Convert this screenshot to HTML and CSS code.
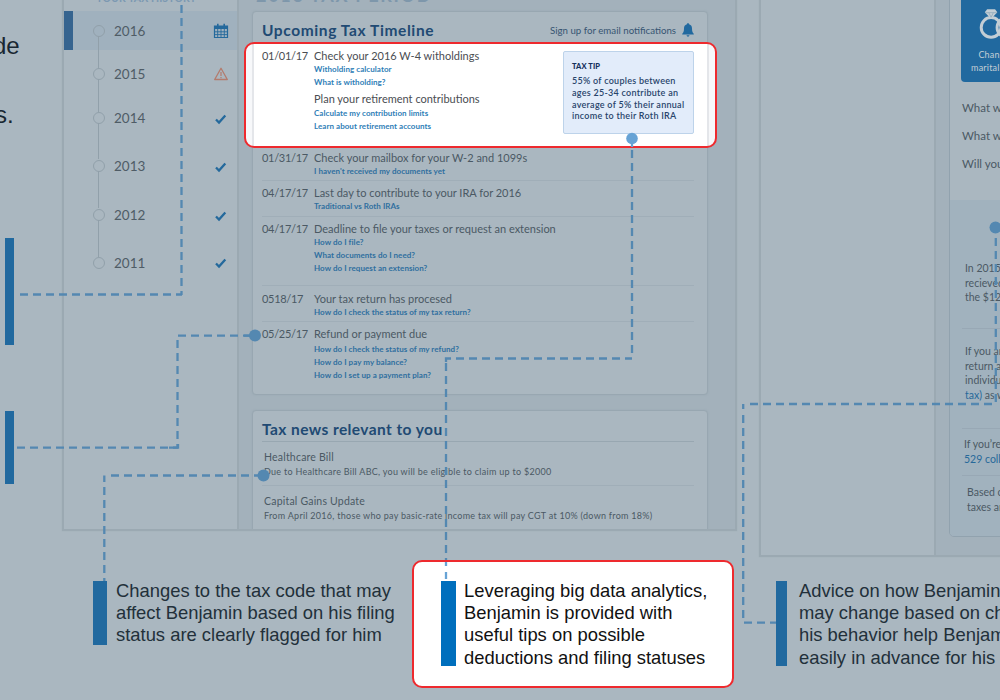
FILE: index.html
```html
<!DOCTYPE html>
<html lang="en">
<head>
<meta charset="utf-8">
<title>Tax dashboard walkthrough</title>
<link rel="stylesheet" href="styles.css">
</head>
<body>
<main class="board">
  <div class="note-fragment fragment-a">de</div>
  <div class="note-fragment fragment-b">s.</div>

  <section class="window dashboard">
    <aside class="history">
      <h3 class="history-title">YOUR TAX HISTORY</h3>
      <ol class="years">
        <li class="year y2016"><i class="ring"></i><span>2016</span>
          <svg class="icon" viewBox="0 0 16 16"><path d="M1.5 3h13v11.5h-13z" fill="none" stroke="currentColor" stroke-width="1.2"/><path d="M1.5 3h13v3h-13zM4 .8h1.6v3H4zM10.4.8H12v3h-1.600z" fill="currentColor"/><path d="M4.700 5v9M8 5v9M11.300 5v9M1.500 8.800h13M1.500 11.600h13" stroke="currentColor" stroke-width=".9"/></svg></li>
        <li class="year y2015"><i class="ring"></i><span>2015</span>
          <svg class="icon warn" viewBox="0 0 16 16"><path d="M8 2.200 14.300 13.500H1.700z" fill="none" stroke="currentColor" stroke-width="1.300" stroke-linejoin="round"/><path d="M8 6v4M8 11v1.200" stroke="currentColor" stroke-width="1.200"/></svg></li>
        <li class="year y2014"><i class="ring"></i><span>2014</span>
          <svg class="icon check" viewBox="0 0 16 16"><path d="M3 8.500 6 11.500 12.300 4.500" fill="none" stroke="currentColor" stroke-width="2.300"/></svg></li>
        <li class="year y2013"><i class="ring"></i><span>2013</span>
          <svg class="icon check" viewBox="0 0 16 16"><path d="M3 8.500 6 11.500 12.300 4.500" fill="none" stroke="currentColor" stroke-width="2.300"/></svg></li>
        <li class="year y2012"><i class="ring"></i><span>2012</span>
          <svg class="icon check" viewBox="0 0 16 16"><path d="M3 8.500 6 11.500 12.300 4.500" fill="none" stroke="currentColor" stroke-width="2.300"/></svg></li>
        <li class="year y2011"><i class="ring"></i><span>2011</span>
          <svg class="icon check last" viewBox="0 0 16 16"><path d="M3 8.500 6 11.500 12.300 4.500" fill="none" stroke="currentColor" stroke-width="2.300"/></svg></li>
      </ol>
    </aside>
    <div class="content">
      <h1 class="period">2016 TAX PERIOD</h1>
      <section class="card timeline">
        <header class="card-head">
          <h2>Upcoming Tax Timeline</h2>
          <span class="signup">Sign up for email notifications</span>
          <svg class="bell" viewBox="0 0 12 14"><path d="M6 .3c.7 0 1.100.4 1.100 1C9.200 1.900 10 3.500 10 5.500c0 3 .6 4.200 1.800 5.300v.7H.2v-.7C1.400 9.700 2 8.500 2 5.500c0-2 .8-3.600 2.900-4.200 0-.6.4-1 1.100-1zM4.500 12.300h3C7.300 13.200 6.800 13.700 6 13.700s-1.300-.5-1.500-1.400z" fill="currentColor"/></svg>
        </header>
        <article class="event event-1 spotlight">
          <time>01/01/17</time>
          <div class="detail">
            <h4>Check your 2016 W-4 witholdings</h4>
            <a>Witholding calculator</a><a>What is witholding?</a>
            <h4 class="second">Plan your retirement contributions</h4>
            <a>Calculate my contribution limits</a><a>Learn about retirement accounts</a>
          </div>
          <aside class="tip">
            <strong>TAX TIP</strong>
            <p>55% of couples between<br>ages 25-34 contribute an<br>average of 5% their annual<br>income to their Roth IRA</p>
          </aside>
        </article>
        <article class="event event-2"><time>01/31/17</time><div class="detail"><h4>Check your mailbox for your W-2 and 1099s</h4><a>I haven't received my documents yet</a></div></article>
        <article class="event event-3"><time>04/17/17</time><div class="detail"><h4>Last day to contribute to your IRA for 2016</h4><a>Traditional vs Roth IRAs</a></div></article>
        <article class="event event-4"><time>04/17/17</time><div class="detail"><h4>Deadline to file your taxes or request an extension</h4><a>How do I file?</a><a>What documents do I need?</a><a>How do I request an extension?</a></div></article>
        <article class="event event-5"><time>0518/17</time><div class="detail"><h4>Your tax return has procesed</h4><a>How do I check the status of my tax return?</a></div></article>
        <article class="event event-6"><time>05/25/17</time><div class="detail"><h4>Refund or payment due</h4><a>How do I check the status of my refund?</a><a>How do I pay my balance?</a><a>How do I set up a payment plan?</a></div></article>
      </section>
      <section class="card news">
        <h2>Tax news relevant to you</h2>
        <article class="story"><h4>Healthcare Bill</h4><p>Due to Healthcare Bill ABC, you will be eligible to claim up to $2000</p></article>
        <article class="story"><h4>Capital Gains Update</h4><p>From April 2016, those who pay basic-rate income tax will pay CGT at 10% (down from 18%)</p></article>
      </section>
    </div>
  </section>

  <section class="window planner">
    <div class="planner-side"></div>
    <div class="planner-main">
      <div class="planner-card">
        <div class="tile">
          <svg class="rings" viewBox="0 0 38 30"><circle cx="12" cy="18" r="8.700" fill="none" stroke="currentColor" stroke-width="2.600"/><circle cx="26" cy="18" r="8.700" fill="none" stroke="currentColor" stroke-width="2.600"/><path d="M8.500 2h7l2 2.600-5.500 6-5.500-6z" fill="currentColor"/><path d="M7 5h10M10 5l2 4 2-4" fill="none" stroke="#8fa9bb" stroke-width=".7"/></svg>
          <span>Change in</span><span>marital status</span>
        </div>
        <ul class="questions"><li>What will</li><li>What will</li><li>Will you</li></ul>
        <div class="advice">
          <p class="a1">In 2015 you<br>recieved<br>the $1200</p>
          <p class="a2">If you are<br>return and<br>individual<br><a>tax)</a> as well</p>
          <p class="a3">If you’re<br><a>529 college</a></p>
          <p class="a4">Based on<br>taxes and</p>
        </div>
      </div>
    </div>
  </section>

  <aside class="callout marker-a"></aside>
  <aside class="callout marker-b"></aside>
  <aside class="callout changes"><p>Changes to the tax code that may<br>affect Benjamin based on his filing<br>status are clearly flagged for him</p></aside>
  <aside class="callout featured"><p>Leveraging big data analytics,<br>Benjamin is provided with<br>useful tips on possible<br>deductions and filing statuses</p></aside>
  <aside class="callout future"><p>Advice on how Benjamin<br>may change based on changes<br>his behavior help Benjamin<br>easily in advance for his</p></aside>

  <svg class="connectors" viewBox="0 0 1000 700">
    <g class="dash">
      <path d="M181.500 5V295"/><path d="M20 294.500H182"/>
      <path d="M178 335.600H250"/><path d="M177.500 340V448"/><path d="M17 447.600H178"/>
      <path d="M111 475.500H258"/><path d="M104.300 487V581"/>
      <path d="M632 150V358"/><path d="M456 358.500H632"/><path d="M446 363V560"/>
      <path d="M995.800 238V403"/><path d="M750 404H996"/><path d="M743.200 415V620"/><path d="M744 622.700H776"/>
    </g>
    <g class="solid"><path d="M104.300 482V475.500"/><path d="M446 362V358.500H451"/><path d="M743.200 409V404"/><path d="M244 335.600H250M169 447.600H178V444"/></g>
    <g class="dots"><circle cx="255" cy="335.600" r="6"/><circle cx="263.500" cy="475.500" r="6"/><circle cx="995.500" cy="227.500" r="6"/></g>
    <g class="bright"><path d="M632 140V147M446 562V566M446 572V579"/><circle cx="632" cy="138.500" r="5.800"/></g>
  </svg>
</main>
</body>
</html>
```

FILE: styles.css
```css
*, *::before, *::after { box-sizing: border-box; }
body { margin: 0; }
h1, h2, h3, h4, p, ol, ul { margin: 0; padding: 0; list-style: none; font-weight: 400; }
.board {
  position: relative; width: 1000px; height: 700px; overflow: hidden;
  background: #aab7c0; color: #4b5964; font-family: Lato, "Open Sans", sans-serif;
}
.note-fragment { position: absolute; left: 0; font: 24px/28px "Liberation Sans", Arial, sans-serif; color: #192732; }
.fragment-a { left: -7px; top: 32px; }
.fragment-b { left: -5px; top: 101px; }

/* application windows */
.window { position: absolute; border: 2px solid #9ba9b2; display: flex; box-shadow: 0 0 1px #9ba9b2; background: #a3b1bb; }
.dashboard { left: 62px; top: -13px; width: 675px; height: 544px; overflow: hidden; }
.history { width: 175px; background: #aab7c0; border-right: 2px solid #9ba9b2; }
.history-title { padding-left: 32px; height: 22px; font-size: 10.500px; line-height: 18px; font-weight: 700; letter-spacing: .1px; color: #7c99b2; }
.year { display: flex; align-items: center; padding: 0 8px 0 29px; font-size: 13.500px; letter-spacing: 0; position: relative; color: #4f5c66; }
.year span { margin-left: 9px; flex: 1; }
.ring { width: 12px; height: 12px; border: 1.500px solid #91a0aa; border-radius: 50%; position: relative; }
.year:not(.y2011) .ring::after { content: ""; position: absolute; left: 4px; top: 10px; width: 1px; height: var(--drop); background: #91a0aa; }
.y2016 { height: 39px; background: #a0b1be; border-left: 9px solid #36648f; padding-left: 20px; --drop: 33px; }
.y2015 { height: 47px; --drop: 33px; }
.y2014 { height: 41px; --drop: 36px; }
.y2013 { height: 55px; --drop: 37px; }
.y2012 { height: 44px; --drop: 37px; }
.y2011 { height: 52px; }
.icon { width: 16px; height: 16px; color: #24699c; }
.warn { color: #b37b6d; }
.check { position: relative; top: 1px; }
.last { top: 0; }
.content { flex: 1; padding-left: 13px; }
.period { height: 24px; padding-left: 4px; margin-top: -5px; font-size: 18px; line-height: 22px; letter-spacing: 1.700px; font-weight: 700; color: #7e97ab; }
.card { width: 456px; border: 1px solid #98a7b1; border-radius: 4px; background: #aab7c0; box-shadow: 0 0 2px #98a7b1; padding: 0 13px 0 9px; }
.timeline { height: 384px; margin-top: 3px; }
.card-head { height: 31px; padding-top: 4px; display: flex; align-items: center; }
.card h2 { font-size: 15.500px; font-weight: 700; color: #214a73; letter-spacing: .6px; flex: 1; }
.card.news h2 { letter-spacing: .42px; }
.signup { font-size: 9.700px; letter-spacing: 0; color: #365572; }
.bell { width: 12px; height: 14px; margin-left: 6px; color: #21699f; }
.event { display: flex; border-bottom: 1px solid #a0aeb8; font-size: 11px; line-height: 15px; }
.event time { width: 52px; letter-spacing: -.3px; flex: none; }
.event h4 { font-size: 11px; line-height: 15px; letter-spacing: 0; white-space: nowrap; }
.detail { flex: 1; }
.detail a { display: block; font-size: 8px; line-height: 13px; font-weight: 700; letter-spacing: .05px; color: #2f6f9f; }
.event-1 { height: 101px; padding-top: 5px; }
.event-2 { height: 37px; padding-top: 6px; }
.event-3 { height: 36px; padding-top: 4px; }
.event-4 { height: 69px; padding-top: 4px; }
.event-5 { height: 36px; padding-top: 5px; }
.event-6 { height: 60px; padding-top: 4px; border: 0; }
.event-6 h4 { margin-bottom: 2px; }
.detail .second { margin: 2px 0 1px; }

/* highlighted timeline entry */
.spotlight { position: relative; isolation: isolate; color: #4a4d52; border-color: #f0f1f3; }
.spotlight::before {
  content: ""; position: absolute; z-index: -1; left: -18px; top: -1px; width: 473px; height: 106px;
  border: 2px solid #ee2a2e; border-radius: 10px;
  background: linear-gradient(90deg, #f7f8fa 6px, #e4e6ea 6px 8px, #fff 8px 461px, #e4e6ea 461px 463px, #f7f8fa 463px);
}
.spotlight .detail a { color: #2f80b7; }
.tip { width: 131px; height: 83px; margin-top: 3px; padding: 8px 0 0 8px; background: #e2ecfa; border: 1px solid #bdd3ea; border-radius: 2px; font-size: 9px; line-height: 11.800px; color: #28446b; font-weight: 700; }
.tip strong { display: block; height: 15px; font-size: 7.500px; line-height: 13px; font-weight: 900; letter-spacing: .1px; color: #14305c; }
.tip p { font-weight: 600; letter-spacing: .27px; white-space: nowrap; }

.news { margin-top: 15px; height: 140px; }
.news h2 { height: 31px; padding-top: 8px; line-height: 20px; border-bottom: 1px solid #98a7b1; }
.story { height: 44px; padding: 8px 0 0 2px; border-bottom: 1px solid #a0aeb8; }
.story h4 { font-size: 10.500px; line-height: 15px; letter-spacing: .2px; }
.story p { font-size: 9px; line-height: 14px; letter-spacing: .28px; white-space: nowrap; }

/* planner window, continuing past the right edge */
.planner { left: 759px; top: -13px; width: 400px; height: 570px; }
.planner-side { width: 175px; background: #aab7c0; border-right: 2px solid #9ba9b2; }
.planner-main { flex: 1; padding-left: 13px; }
.planner-card { height: 548px; border: 1px solid #91a2ae; border-radius: 5px; background: #aab7c0; overflow: hidden; }
.tile { margin: 0 0 0 11px; width: 76px; height: 92px; border-radius: 0 0 4px 4px; background: #21699f; color: #c3ced5; display: flex; flex-direction: column; align-items: center; padding-top: 17px; font-size: 9px; line-height: 12.500px; letter-spacing: .2px; white-space: nowrap; }
.rings { width: 46px; height: 34px; margin-bottom: 8px; flex: none; }
.questions { padding: 12px 0 0 12px; height: 118px; font-size: 11.500px; line-height: 28px; white-space: nowrap; }
.advice { height: 340px; background: #a1b2be; padding-left: 12px; font-size: 10.500px; line-height: 14.500px; white-space: nowrap; }
.advice p { border-bottom: 1px solid #98a8b5; }
.advice a { color: #27699a; }
.a1 { height: 129px; padding: 61px 0 0 3px; }
.a2 { height: 100px; padding: 15px 0 0 3px; }
.a3 { height: 47px; padding: 8px 0 0 2px; }
.advice .a4 { padding: 9px 0 0 5px; border: 0; }

/* annotations */
.callout { position: absolute; border-left: 14px solid #21699f; color: #22303a; font: 18.400px/22.200px "Liberation Sans", Arial, sans-serif; white-space: nowrap; }
.marker-a { left: 5px; top: 238px; height: 107px; border-width: 9px; border-right: 0; border-top: 0; border-bottom: 0; }
.marker-b { left: 5px; top: 411px; height: 73px; border-width: 9px; border-right: 0; border-top: 0; border-bottom: 0; }
.changes { left: 93px; top: 581px; height: 64px; padding-left: 9px; }
.changes p, .future p { margin-top: -1px; }
.featured { left: 412px; top: 560px; width: 322px; height: 128px; padding: 19px 0 0 50px; border: 2px solid #ee2a2e; border-radius: 10px; background: #fff; color: #111; }
.featured::before { content: ""; position: absolute; left: 27px; top: 19px; width: 15px; height: 85px; background: #006fbd; }
.featured p { margin-top: -1px; }
.future { left: 776px; top: 581px; height: 85px; border-left-width: 11px; padding-left: 12px; }
.connectors { position: absolute; left: 0; top: 0; width: 1000px; height: 700px; fill: none; stroke-width: 2.300; }
.dash { stroke: #5488b1; stroke-dasharray: 8 5; }
.solid { stroke: #5488b1; }
.dots { fill: #5488b1; }
.bright { stroke: #67a3d5; }
.bright circle { fill: #67a3d5; stroke: none; }
```
